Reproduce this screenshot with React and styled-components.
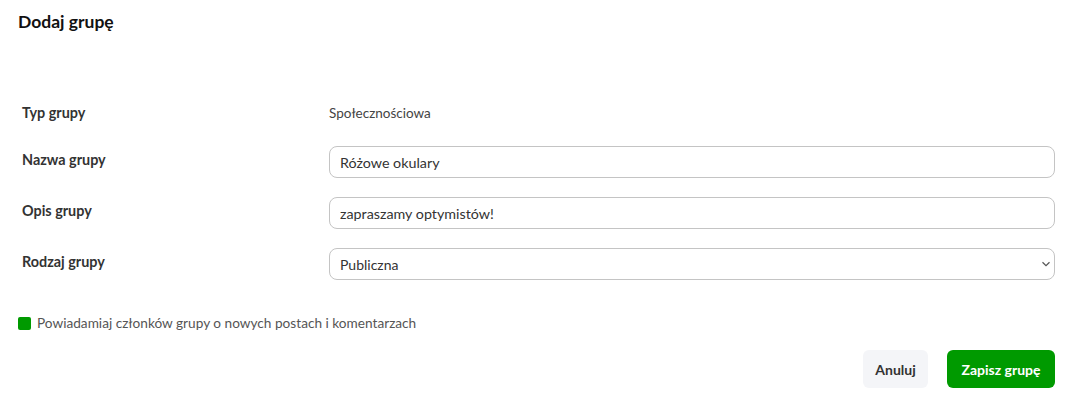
import React from "react";
import styled, { createGlobalStyle } from "styled-components";

const Global = createGlobalStyle`
  html, body { margin: 0; padding: 0; background: #fff; }
  body { font-family: "Lato", "Noto Sans", sans-serif; color: #333; }
  * { box-sizing: border-box; }
`;

const Page = styled.div`
  width: 1068px;
  padding: 12px 13px 0 18px;
`;

const Title = styled.h1`
  margin: 0;
  font-size: 17.5px;
  font-weight: 700;
  color: #111;
  line-height: 20px;
`;

const Form = styled.div`
  margin-top: 63px;
  display: flex;
  flex-direction: column;
  gap: 19px;
`;

const Row = styled.div`
  display: grid;
  grid-template-columns: 307px 1fr;
  padding-left: 4px;
  align-items: start;
  min-height: 32px;
`;

const Label = styled.div`
  font-size: 14.4px;
  font-weight: 700;
  color: #333;
  padding-top: ${(p) => p.$top || 5}px;
`;

const Value = styled.div`
  font-size: 13.5px;
  color: #444;
  padding-top: 10px;
`;

const Input = styled.input`
  width: 100%;
  height: 32px;
  border: 1px solid #c4c4c4;
  border-radius: 8px;
  padding: 0 10px;
  font-family: inherit;
  font-size: 14.3px;
  color: #333;
  outline: none;
  background: #fff;
`;

const SelectWrap = styled.div`
  position: relative;
`;

const Select = styled.select`
  width: 100%;
  height: 32px;
  border: 1px solid #c4c4c4;
  border-radius: 8px;
  padding: 0 10px;
  font-family: inherit;
  font-size: 14px;
  color: #333;
  background: #fff;
  appearance: none;
  outline: none;
`;

const Chevron = styled.svg`
  position: absolute;
  right: 4px;
  top: 13px;
  pointer-events: none;
`;

const CheckRow = styled.label`
  display: flex;
  align-items: center;
  gap: 6px;
  margin-top: 35px;
  font-size: 13.65px;
  color: #555;
`;

const Box = styled.span`
  width: 13px;
  height: 13px;
  border-radius: 2px;
  background: #009a00;
  display: inline-block;
`;

const Actions = styled.div`
  display: flex;
  justify-content: flex-end;
  gap: 19px;
  margin-top: 19px;
`;

const Button = styled.button`
  height: 38px;
  width: ${(p) => p.$w}px;
  padding: 0;
  border: none;
  border-radius: 6px;
  font-family: inherit;
  font-size: 14px;
  font-weight: 700;
  background: ${(p) => (p.$primary ? "#009a00" : "#f4f5f8")};
  color: ${(p) => (p.$primary ? "#fff" : "#333")};
`;

export default function App() {
  return (
    <>
      <Global />
      <Page>
        <Title>Dodaj grupę</Title>
        <Form>
          <Row>
            <Label $top={9}>Typ grupy</Label>
            <Value>Społecznościowa</Value>
          </Row>
          <Row>
            <Label>Nazwa grupy</Label>
            <Input defaultValue="Różowe okulary" />
          </Row>
          <Row>
            <Label>Opis grupy</Label>
            <Input defaultValue="zapraszamy optymistów!" />
          </Row>
          <Row>
            <Label>Rodzaj grupy</Label>
            <SelectWrap>
              <Select defaultValue="Publiczna">
                <option>Publiczna</option>
                <option>Prywatna</option>
              </Select>
              <Chevron width="10" height="6" viewBox="0 0 10 6">
                <path d="M1.5 1.2 L5 4.6 L8.5 1.2" fill="none" stroke="#555" strokeWidth="1.2" />
              </Chevron>
            </SelectWrap>
          </Row>
        </Form>
        <CheckRow>
          <Box />
          Powiadamiaj członków grupy o nowych postach i komentarzach
        </CheckRow>
        <Actions>
          <Button $w={65}>Anuluj</Button>
          <Button $w={108} $primary>Zapisz grupę</Button>
        </Actions>
      </Page>
    </>
  );
}
